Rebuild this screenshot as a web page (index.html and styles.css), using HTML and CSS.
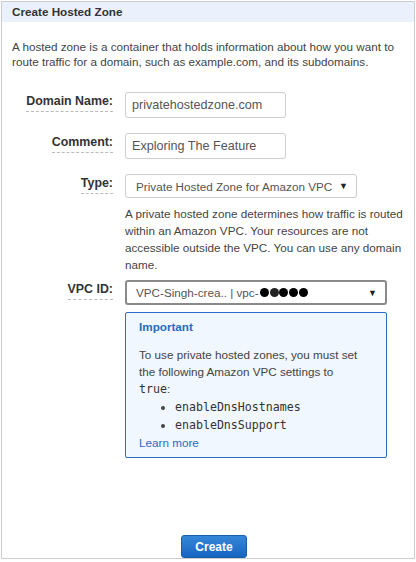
FILE: index.html
```html
<!DOCTYPE html>
<html>
<head>
<meta charset="utf-8">
<link rel="stylesheet" href="styles.css">
</head>
<body>
<div class="panel">
  <div class="header">Create Hosted Zone</div>
  <p class="intro">A hosted zone is a container that holds information about how you want to route traffic for a domain, such as example.com, and its subdomains.</p>
  <div class="form">
    <div class="row">
      <div class="label"><span>Domain Name:</span></div>
      <div class="field"><div class="input">privatehostedzone.com</div></div>
    </div>
    <div class="row">
      <div class="label"><span>Comment:</span></div>
      <div class="field"><div class="input">Exploring The Feature</div></div>
    </div>
    <div class="row">
      <div class="label"><span>Type:</span></div>
      <div class="field">
        <div class="select type"><span>Private Hosted Zone for Amazon VPC</span><span class="arrow">▼</span></div>
        <p class="desc">A private hosted zone determines how traffic is routed within an Amazon VPC. Your resources are not accessible outside the VPC. You can use any domain name.</p>
      </div>
    </div>
    <div class="row vpc-row">
      <div class="label"><span>VPC ID:</span></div>
      <div class="field">
        <div class="select vpc"><span class="vpc-text">VPC-Singh-crea.. | vpc-<span class="mask"><b class="dot"></b><b class="dot"></b><b class="dot"></b><b class="dot"></b><b class="dot"></b></span></span><span class="arrow">▼</span></div>
        <div class="notice">
          <div class="notice-title">Important</div>
          <p class="notice-text">To use private hosted zones, you must set the following Amazon VPC settings to <code>true</code>:</p>
          <ul>
            <li><code>enableDnsHostnames</code></li>
            <li><code>enableDnsSupport</code></li>
          </ul>
          <a class="learn">Learn more</a>
        </div>
      </div>
    </div>
  </div>
  <div class="footer"><button class="btn">Create</button></div>
</div>
</body>
</html>
```

FILE: styles.css
```css
html, body {
  margin: 0;
  padding: 0;
  background: #fff;
}
body {
  padding: 1px 0 0 1px;
  font-family: "Liberation Sans", Arial, sans-serif;
  color: #444;
}
.panel {
  width: 412px;
  height: 556px;
  border: 1px solid #ccc;
  display: flex;
  flex-direction: column;
}
.header {
  height: 20px;
  background: #eaf1fc;
  font-weight: bold;
  font-size: 11.7px;
  line-height: 20px;
  color: #333;
  padding-left: 10px;
}
.intro {
  margin: 17px 10px 0 10px;
  font-size: 11.7px;
  line-height: 15px;
  color: #444;
}
.form {
  margin-top: 23px;
  display: flex;
  flex-direction: column;
}
.row {
  display: flex;
  gap: 12px;
}
.row + .row {
  margin-top: 15px;
}
.row.vpc-row {
  margin-top: 7px;
}
.label {
  width: 111px;
  flex: none;
  text-align: right;
  padding-top: 2px;
  font-size: 12.4px;
  line-height: 14px;
  font-weight: bold;
  color: #333;
}
.label span {
  border-bottom: 1px dashed #bbb;
  padding-bottom: 3px;
}
.field {
  width: 282px;
  display: flex;
  flex-direction: column;
  align-items: flex-start;
}
.input {
  width: 153px;
  height: 24px;
  border: 1px solid #ccc;
  border-radius: 3px;
  padding: 0 0 0 6px;
  font-size: 12.6px;
  line-height: 24px;
  color: #555;
  white-space: nowrap;
}
.select {
  height: 22px;
  border: 1px solid #ccc;
  border-radius: 3px;
  display: flex;
  align-items: center;
  justify-content: space-between;
  padding: 0 8px 0 10px;
  font-size: 11.7px;
  color: #555;
  white-space: nowrap;
}
.select.type {
  width: 212px;
}
.select.vpc {
  width: 241px;
  height: 21px;
  border: 2px solid #8a8a8a;
  padding: 0 8px 0 9px;
}
.vpc-text {
  display: flex;
  align-items: center;
}
.arrow {
  font-size: 9px;
  color: #222;
}
.mask {
  display: inline-flex;
  align-items: center;
  margin-left: 1px;
}
.dot {
  display: inline-block;
  width: 9px;
  height: 9px;
  border-radius: 50%;
  background: #000;
  margin-right: 1px;
}
.dot:nth-child(2) {
  margin-right: 0;
  background: #222;
}
.desc {
  margin: 7px 0 0 0;
  width: 282px;
  font-size: 11.7px;
  line-height: 17px;
  color: #444;
}
.notice {
  margin-top: 7px;
  width: 225px;
  border: 1px solid #2a6fc4;
  border-radius: 2px;
  background: #f0f7fe;
  padding: 7px 22px 5px 13px;
  font-size: 11.7px;
  color: #444;
}
.notice-title {
  font-weight: bold;
  color: #1f6dc2;
  font-size: 11.7px;
  line-height: 14px;
}
.notice-text {
  margin: 12px 0 0 0;
  line-height: 17px;
}
code {
  font-family: "DejaVu Sans Mono", monospace;
  font-size: 11.6px;
  color: #333;
}
ul {
  margin: 0;
  padding-left: 36px;
  line-height: 18px;
}
.learn {
  display: block;
  color: #1f6dc2;
  font-size: 11.7px;
  line-height: 18px;
}
.footer {
  margin-top: auto;
  display: flex;
  justify-content: center;
  padding: 0 0 0 12px;
}
.btn {
  width: 66px;
  height: 23px;
  border: 1px solid #1a5ea8;
  border-radius: 3px;
  background: linear-gradient(#3586d8, #1666c1);
  color: #fff;
  font-family: "Liberation Sans", Arial, sans-serif;
  font-weight: bold;
  font-size: 12px;
  padding: 0;
}
```
